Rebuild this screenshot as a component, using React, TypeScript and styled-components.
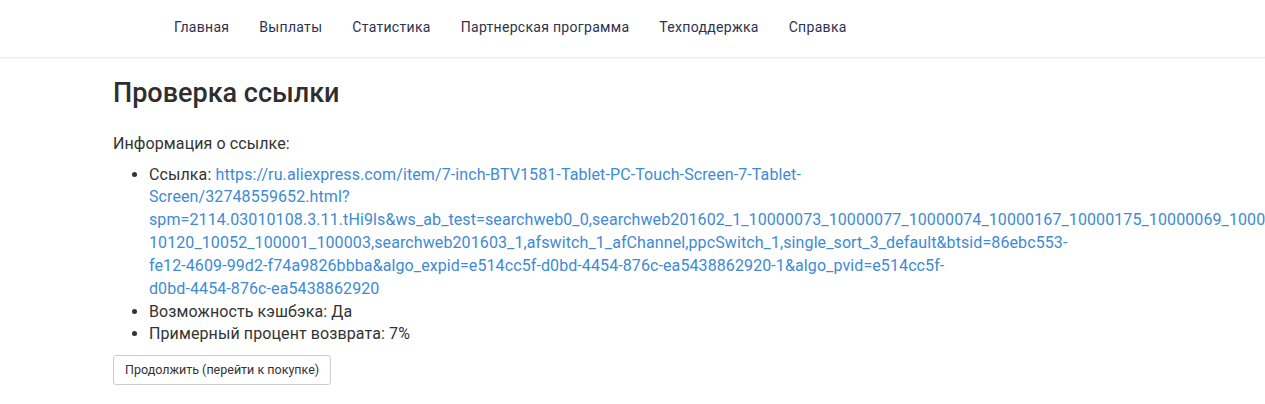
import React from 'react';
import styled, { createGlobalStyle } from 'styled-components';

const GlobalStyle = createGlobalStyle`
  html, body {
    margin: 0;
    padding: 0;
    background: #fff;
    overflow: hidden;
  }
  body {
    font-family: Roboto, "Liberation Sans", Arial, sans-serif;
    font-size: 16px;
    line-height: 1.42857;
    letter-spacing: 0.1px;
    color: #333;
  }
`;

const Navbar = styled.nav`
  height: 57px;
  border-bottom: 1px solid #ebebeb;
  box-shadow: 0 1px 2px rgba(0, 0, 0, 0.04);
  background: #fff;
`;

const NavList = styled.ul`
  list-style: none;
  margin: 0;
  padding: 0 0 0 159px;
  display: flex;
`;

const NavLink = styled.a`
  display: block;
  padding: 17px 15px 15px;
  font-size: 14px;
  letter-spacing: 0.3px;
  line-height: 20px;
  color: #2b3250;
  text-decoration: none;
`;

const Main = styled.main`
  width: 862px;
  padding-left: 113px;
`;

const Title = styled.h2`
  margin: 21px 0 0;
  font-size: 27px;
  font-weight: 500;
  letter-spacing: 0;
  line-height: 1.1;
  color: #2e2e2e;
`;

const Lead = styled.p`
  margin: 24px 0 8px;
`;

const InfoList = styled.ul`
  margin: 0 0 9px;
  padding-left: 36px;
  list-style: disc;
`;

const Link = styled.a`
  color: #3d8ad6;
  text-decoration: none;
`;

const Button = styled.button`
  font-family: Roboto, "Liberation Sans", Arial, sans-serif;
  font-size: 12.5px;
  line-height: 1.5;
  color: #333;
  background: #fff;
  border: 1px solid #ccc;
  border-radius: 3px;
  padding: 4px 11px;
  height: 30px;
  cursor: pointer;
`;

const navItems = ['Главная', 'Выплаты', 'Статистика', 'Партнерская программа', 'Техподдержка', 'Справка'];

const url =
  'https://ru.aliexpress.com/item/7-inch-BTV1581-Tablet-PC-Touch-Screen-7-Tablet-Screen/32748559652.html?spm=2114.03010108.3.11.tHi9ls&ws_ab_test=searchweb0_0,searchweb201602_1_10000073_10000077_10000074_10000167_10000175_10000069_10000066_10000063_10000131_10000156-10120_10052_100001_100003,searchweb201603_1,afswitch_1_afChannel,ppcSwitch_1,single_sort_3_default&btsid=86ebc553-fe12-4609-99d2-f74a9826bbba&algo_expid=e514cc5f-d0bd-4454-876c-ea5438862920-1&algo_pvid=e514cc5f-d0bd-4454-876c-ea5438862920';

const App: React.FC = () => {
  return (
    <>
      <GlobalStyle />
      <Navbar>
        <NavList>
          {navItems.map((item) => (
            <li key={item}>
              <NavLink href="#">{item}</NavLink>
            </li>
          ))}
        </NavList>
      </Navbar>
      <Main>
        <Title>Проверка ссылки</Title>
        <Lead>Информация о ссылке:</Lead>
        <InfoList>
          <li>
            Ссылка: <Link href="#">{url}</Link>
          </li>
          <li>Возможность кэшбэка: Да</li>
          <li>Примерный процент возврата: 7%</li>
        </InfoList>
        <Button>Продолжить (перейти к покупке)</Button>
      </Main>
    </>
  );
};

export default App;
